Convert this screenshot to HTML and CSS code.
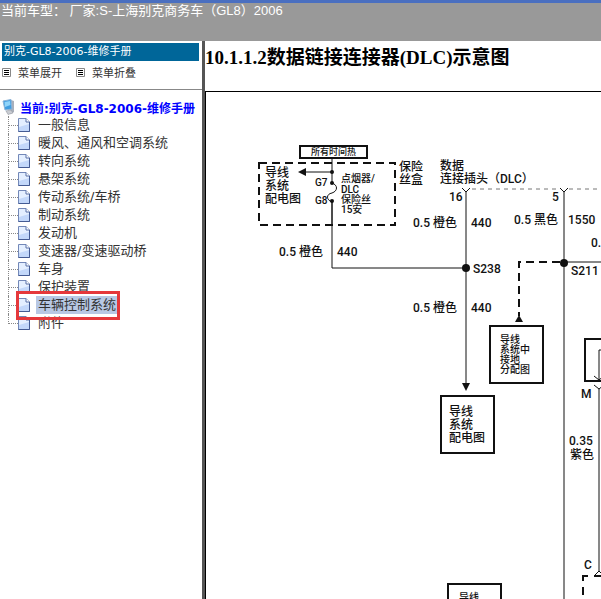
FILE: index.html
```html
<!DOCTYPE html>
<html lang="zh-CN">
<head>
    <meta charset="UTF-8">
    <meta name="viewport" content="width=device-width, initial-scale=1.0">
    <title>别克-GL8-2006-维修手册</title>
    <link rel="stylesheet" href="styles.css">
</head>
<body>
    <!-- shared icons -->
    <svg class="defs" width="0" height="0">
        <symbol id="page" viewBox="0 0 12 14">
            <path d="M.5 .5H8L11.500 4V13.500H.5Z" fill="#e4efff" stroke="#7388b8"/>
            <path d="M1 13V9L11 6V13Z" fill="#c3d8fa"/>
            <path d="M8 .5V4H11.500" fill="#fff" stroke="#5870a8"/>
            <path d="M11.500 4V13.500H.5" fill="none" stroke="#445b93"/>
        </symbol>
        <symbol id="list" viewBox="0 0 9 9">
            <path d="M.5 .5H8.500V8.500H.5Z" fill="#fff" stroke="#888"/>
            <path d="M2 2.500H7M2 4.500H7M2 6.500H7" stroke="#000"/>
        </symbol>
    </svg>

    <header class="topbar">当前车型： 厂家:S-上海别克商务车（GL8）2006</header>

    <div class="main">
        <aside class="sidebar">
            <div class="title">别克-GL8-2006-维修手册</div>
            <div class="tools">
                <button type="button"><svg width="9" height="9"><use href="#list"/></svg>菜单展开</button>
                <button type="button"><svg width="9" height="9"><use href="#list"/></svg>菜单折叠</button>
            </div>
            <nav class="tree">
                <a class="root" href="#">
                    <svg width="14" height="16" viewBox="0 0 14 16">
                        <path d="M9 1L12 2V13L8 15Z" fill="#a9b0bb"/>
                        <path d="M1 2L9 .5L10 10L3 11Z" fill="#3f9de0" stroke="#8fb4d6"/>
                        <path d="M2.500 3L8 2L8.500 6L3 8Z" fill="#8fd4fa"/>
                        <path d="M4 12L9 11L11 14L6 15.500Z" fill="#c9ccd2" stroke="#8a8f99" stroke-width=".5"/>
                    </svg>当前:别克-GL8-2006-维修手册</a>
                <ul>
                    <li><a href="#"><svg width="12" height="14"><use href="#page"/></svg><span>一般信息</span></a></li>
                    <li><a href="#"><svg width="12" height="14"><use href="#page"/></svg><span>暖风、通风和空调系统</span></a></li>
                    <li><a href="#"><svg width="12" height="14"><use href="#page"/></svg><span>转向系统</span></a></li>
                    <li><a href="#"><svg width="12" height="14"><use href="#page"/></svg><span>悬架系统</span></a></li>
                    <li><a href="#"><svg width="12" height="14"><use href="#page"/></svg><span>传动系统/车桥</span></a></li>
                    <li><a href="#"><svg width="12" height="14"><use href="#page"/></svg><span>制动系统</span></a></li>
                    <li><a href="#"><svg width="12" height="14"><use href="#page"/></svg><span>发动机</span></a></li>
                    <li><a href="#"><svg width="12" height="14"><use href="#page"/></svg><span>变速器/变速驱动桥</span></a></li>
                    <li><a href="#"><svg width="12" height="14"><use href="#page"/></svg><span>车身</span></a></li>
                    <li><a href="#"><svg width="12" height="14"><use href="#page"/></svg><span>保护装置</span></a></li>
                    <li class="active"><a href="#"><svg width="12" height="14"><use href="#page"/></svg><span>车辆控制系统</span></a></li>
                    <li><a href="#"><svg width="12" height="14"><use href="#page"/></svg><span>附件</span></a></li>
                </ul>
            </nav>
        </aside>

        <main class="content">
            <h1>10.1.1.2数据链接连接器(DLC)示意图</h1>
            <div class="frame">
                <svg class="diagram" width="800" height="900" viewBox="0 0 800 900">
                    <!-- fuse block -->
                    <rect class="box" x="94" y="54" width="67" height="12"/>
                    <text class="xs" x="105" y="63">所有时间热</text>
                    <path class="dash" d="M53 71H189V133H53Z"/>
                    <path class="wire" d="M126 66V91M126 80H99"/>
                    <path d="M92 80L100 76V84Z"/>
                    <path class="wire" d="M126 91C132 93 132 99 126 101C120 102 120 108 126 110V134"/>
                    <circle cx="126" cy="80" r="2"/>
                    <circle cx="126" cy="91" r="2"/>
                    <circle cx="126" cy="109" r="2"/>
                    <text x="59" y="85">导线</text>
                    <text x="59" y="98">系统</text>
                    <text x="59" y="111">配电图</text>
                    <text class="s" x="109" y="94">G7</text>
                    <text class="s" x="109" y="112">G8</text>
                    <text class="s" x="135" y="90">点烟器/</text>
                    <text class="s" x="135" y="101">DLC</text>
                    <text class="s" x="135" y="111">保险丝</text>
                    <text class="s" x="135" y="121">15安</text>
                    <text x="193" y="79">保险</text>
                    <text x="193" y="92">丝盒</text>

                    <!-- data link connector -->
                    <text x="234" y="78">数据</text>
                    <text x="234" y="91">连接插头（DLC）</text>
                    <path class="thin" d="M266 97H353M363 97H500"/>
                    <path class="wire" d="M256 96L260 100L264 96M354 96L358 100L362 96"/>
                    <text x="243" y="109">16</text>
                    <text x="346" y="109">5</text>

                    <!-- circuit 440 -->
                    <path class="wire" d="M126 109V176H260M260 100V294"/>
                    <circle cx="260" cy="176" r="4"/>
                    <path d="M256 291H264L260 299Z"/>
                    <text x="73" y="164">0.5 橙色</text>
                    <text x="131" y="164">440</text>
                    <text x="207" y="135">0.5 橙色</text>
                    <text x="265" y="135">440</text>
                    <text x="267" y="181">S238</text>
                    <text x="207" y="220">0.5 橙色</text>
                    <text x="265" y="220">440</text>
                    <rect class="box" x="235" y="304" width="53" height="57"/>
                    <text x="243" y="324">导线</text>
                    <text x="243" y="337">系统</text>
                    <text x="243" y="350">配电图</text>

                    <!-- circuit 1550 -->
                    <path class="wire" d="M358 100V900M358 170H500"/>
                    <path class="dash" d="M354 170H313V224"/>
                    <circle cx="358" cy="171" r="4"/>
                    <path d="M309 230H317L313 223Z"/>
                    <text x="308" y="132">0.5 黑色</text>
                    <text x="362" y="132">1550</text>
                    <text x="385" y="155">0.5</text>
                    <text x="365" y="183">S211</text>
                    <rect class="box" x="284" y="234" width="53" height="57"/>
                    <text class="s" x="294" y="251">导线</text>
                    <text class="s" x="294" y="261">系统中</text>
                    <text class="s" x="294" y="271">接地</text>
                    <text class="s" x="294" y="281">分配图</text>

                    <!-- purple circuit -->
                    <rect class="box" x="379" y="247" width="60" height="42"/>
                    <path class="wire" d="M420 258H393V288M388 284L393 288L398 284M388 293L393 297L398 293M393 297V479M388 484L393 479L398 484"/>
                    <path class="box" d="M396 484H388M382 484H377V489M377 495V503"/>
                    <text x="375" y="306">M</text>
                    <text x="363" y="353">0.35</text>
                    <text x="364" y="367">紫色</text>
                    <text x="378" y="477">C</text>

                    <rect class="box" x="242" y="492" width="53" height="57"/>
                    <text class="s" x="253" y="509">导线</text>
                </svg>
            </div>
        </main>
    </div>
</body>
</html>
```

FILE: styles.css
```css
*, ::before, ::after {
    box-sizing: border-box;
}
body {
    margin: 0;
    height: 100vh;
    display: flex;
    flex-direction: column;
    overflow: hidden;
    background: #fff;
    font-family: "DejaVu Sans", "Noto Sans CJK SC", sans-serif;
}
.defs {
    position: absolute;
}
.topbar {
    height: 41px;
    flex: none;
    border-top: 3px solid #4a6fc0;
    background: #999;
    color: #fff;
    font: 13px/16px "Liberation Sans", "Noto Sans CJK SC", sans-serif;
    padding-left: 1px;
    white-space: nowrap;
}
.main {
    flex: 1;
    display: flex;
    min-height: 0;
}
.sidebar {
    width: 205px;
    flex: none;
    border-right: 3px solid #555;
    white-space: nowrap;
}
.title {
    margin: 2px 3px 0 2px;
    padding-left: 2px;
    background: #069;
    color: #fff;
    font-size: 11px;
    line-height: 18px;
}
.tools {
    display: flex;
    gap: 14px;
    height: 29px;
    padding: 2px 2px 8px;
    border-bottom: 1px solid #888;
}
.tools button {
    display: flex;
    align-items: center;
    gap: 7px;
    padding: 0;
    border: none;
    background: none;
    color: #333;
    font: 11px "DejaVu Sans", "Noto Sans CJK SC", sans-serif;
    cursor: pointer;
}
.tree {
    padding: 8px 0 0 2px;
}
.tree a {
    display: flex;
    align-items: center;
    height: 18px;
    color: #333;
    text-decoration: none;
}
.tree .root {
    gap: 4px;
    color: #00f;
    font-size: 12px;
    font-weight: bold;
}
.tree ul {
    list-style: none;
    margin: 0 0 0 6px;
    padding: 0;
    font-size: 13px;
}
.tree li {
    border-left: 1px dotted #888;
}
.tree li:last-child {
    height: 10px;
}
.tree li a::before {
    content: "";
    width: 9px;
    border-top: 1px dotted #888;
}
.tree li span {
    margin-left: 6px;
    padding: 0 1px 0 2px;
    line-height: 18px;
}
.tree li:hover span,
.tree .active span {
    background: #b8c8e4;
}
.tree .active {
    position: relative;
}
/* red marker around the selected chapter */
.tree .active::after {
    content: "";
    position: absolute;
    left: 7px;
    top: -5px;
    width: 104px;
    height: 29px;
    border: 3px solid #e5383b;
    pointer-events: none;
}
.content {
    flex: 1;
    min-width: 0;
    display: flex;
    flex-direction: column;
}
.content h1 {
    margin: 0;
    height: 50px;
    font: bold 19px/34px "Liberation Serif", "Noto Sans CJK SC", serif;
    white-space: nowrap;
}
.frame {
    flex: 1;
    min-height: 0;
    overflow: hidden;
    border-top: 1px solid #000;
    border-left: 1px solid #000;
}
.diagram {
    display: block;
    font-family: Roboto, "Noto Sans CJK SC", sans-serif;
    font-size: 12px;
    font-weight: 500;
    fill: #111;
}
.diagram .s {
    font-size: 10px;
}
.diagram .xs {
    font-size: 9px;
}
.box, .wire, .dash, .thin {
    fill: none;
    stroke: #111;
}
.box {
    stroke-width: 2px;
}
.dash {
    stroke-width: 2px;
    stroke-dasharray: 8 5;
}
.thin {
    stroke: #777;
    stroke-dasharray: 4 4;
}
```
